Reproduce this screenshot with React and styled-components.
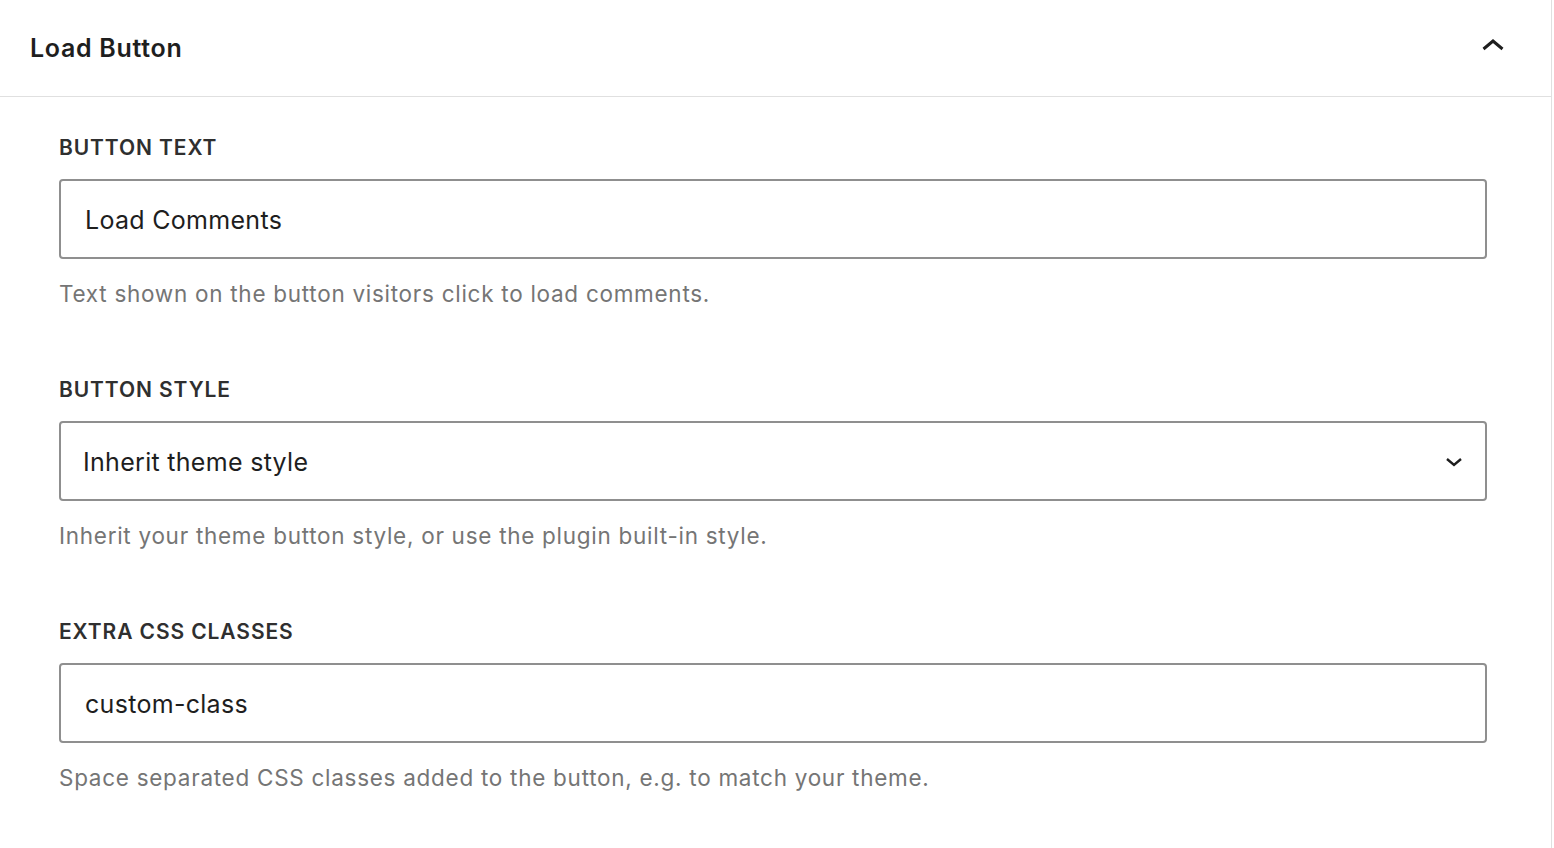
import styled, { createGlobalStyle } from "styled-components"

const GlobalStyle = createGlobalStyle`
  html, body {
    margin: 0;
    padding: 0;
    background: #fff;
  }
  body {
    font-family: Inter, "Noto Sans", "Liberation Sans", sans-serif;
    -webkit-font-smoothing: antialiased;
  }
`

const Panel = styled.div`
  width: 1552px;
  min-height: 848px;
  box-sizing: border-box;
  border-right: 1px solid #e0e0e0;
  background: #fff;
`

const Header = styled.div`
  display: flex;
  align-items: center;
  justify-content: space-between;
  height: 96px;
  padding: 0 46px 0 30px;
  border-bottom: 1px solid #e0e0e0;
`

const Title = styled.h2`
  margin: 0;
  font-size: 25px;
  font-weight: 600;
  color: #1e1e1e;
  letter-spacing: 0.7px;
`

const Toggle = styled.button`
  display: flex;
  align-items: center;
  justify-content: center;
  width: 24px;
  height: 24px;
  padding: 0;
  margin-top: -6px;
  border: 0;
  background: none;
  color: #1e1e1e;
  cursor: pointer;
`

const Body = styled.div`
  display: flex;
  flex-direction: column;
  gap: 69px;
  padding: 38px 64px 40px 59px;
`

const Field = styled.div`
  display: flex;
  flex-direction: column;
`

const Label = styled.label`
  font-size: 21px;
  line-height: 26px;
  font-weight: 600;
  letter-spacing: 0.9px;
  text-transform: uppercase;
  color: #2f2f2f;
  margin-bottom: 18px;
`

const Control = styled.div`
  display: flex;
  align-items: center;
  justify-content: space-between;
  height: 80px;
  box-sizing: border-box;
  border: 2px solid #8f8f8f;
  border-radius: 4px;
  padding: ${p => (p.$select ? "1px 21px 0 22px" : "1px 24px 0")};
  font-size: 25px;
  color: #1e1e1e;
`

const Value = styled.span`
  letter-spacing: 0.3px;
`

const Help = styled.p`
  margin: 21px 0 0;
  font-size: 22.5px;
  line-height: 28px;
  color: #757575;
  letter-spacing: 0.72px;
`

const ChevronUp = () => (
  <svg width="24" height="24" viewBox="0 0 24 24" fill="none">
    <path d="M2.5 16 L12 8 L21.5 16" stroke="currentColor" strokeWidth="3" />
  </svg>
)

const ChevronDown = () => (
  <svg width="20" height="20" viewBox="0 0 20 20" fill="none">
    <path d="M3 7 L10 13 L17 7" stroke="#1e1e1e" strokeWidth="2.4" />
  </svg>
)

const App = () => {
  return (
    <>
      <GlobalStyle />
      <Panel>
        <Header>
          <Title>Load Button</Title>
          <Toggle aria-label="Collapse">
            <ChevronUp />
          </Toggle>
        </Header>
        <Body>
          <Field>
            <Label>Button Text</Label>
            <Control>
              <Value>Load Comments</Value>
            </Control>
            <Help>Text shown on the button visitors click to load comments.</Help>
          </Field>
          <Field>
            <Label>Button Style</Label>
            <Control $select>
              <Value>Inherit theme style</Value>
              <ChevronDown />
            </Control>
            <Help>Inherit your theme button style, or use the plugin built-in style.</Help>
          </Field>
          <Field>
            <Label>Extra CSS Classes</Label>
            <Control>
              <Value>custom-class</Value>
            </Control>
            <Help>Space separated CSS classes added to the button, e.g. to match your theme.</Help>
          </Field>
        </Body>
      </Panel>
    </>
  )
}

export default App
